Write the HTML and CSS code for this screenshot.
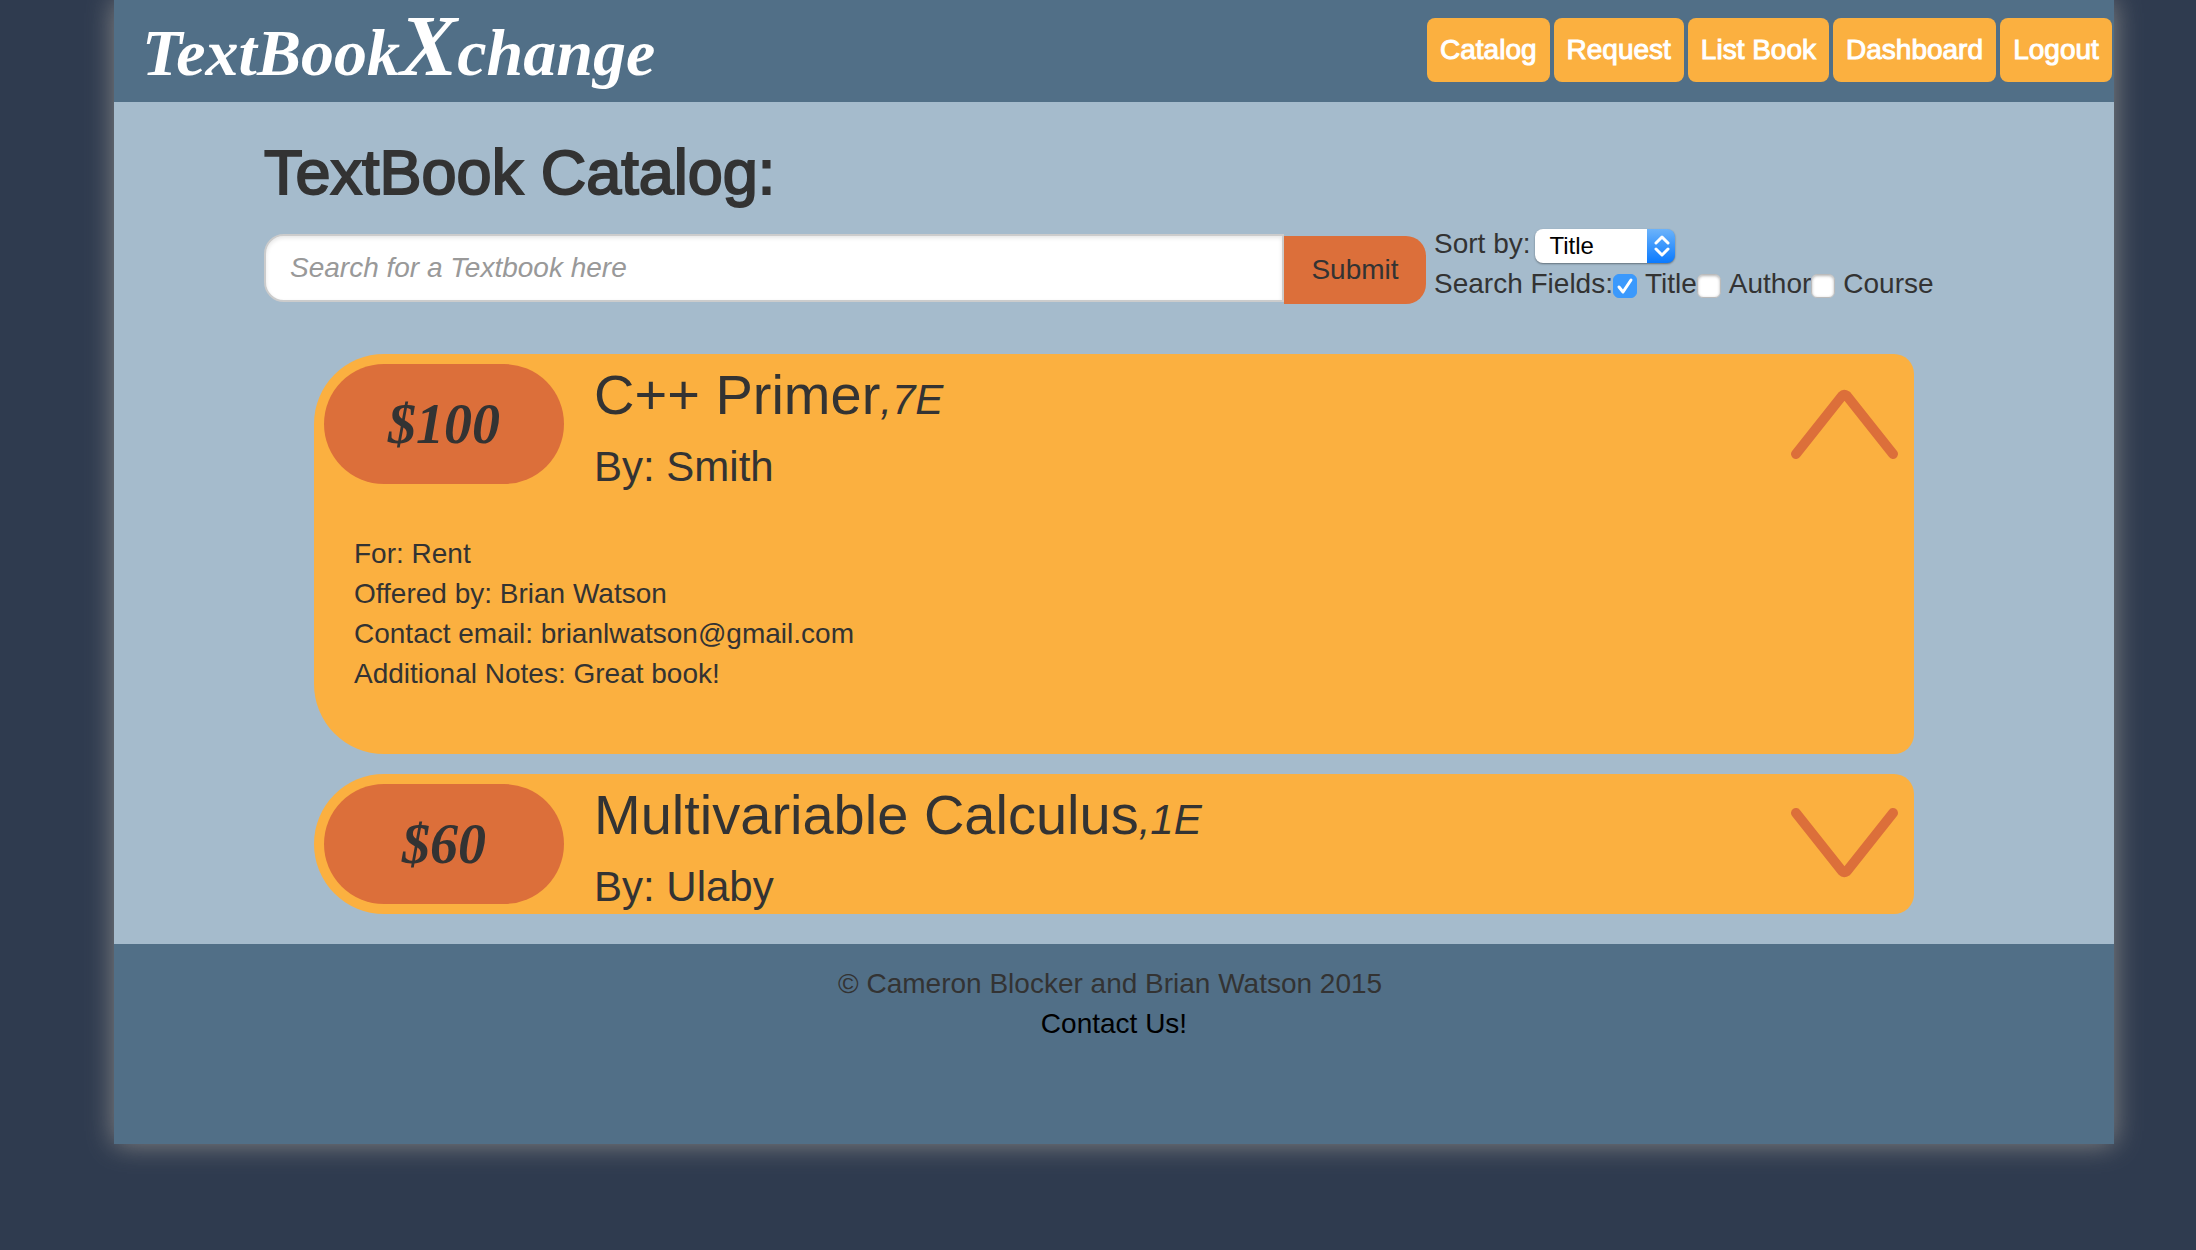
FILE: index.html
```html
<!DOCTYPE html>
<html lang="en">
<head>
<meta charset="utf-8">
<title>TextBookXchange</title>
<link rel="stylesheet" href="styles.css">
</head>
<body>
<div class="page">
  <header class="header">
    <a class="logo" href="#">TextBook<span class="logo-x">X</span>change</a>
    <nav class="nav">
      <a class="nav-link" href="#">Catalog</a>
      <a class="nav-link" href="#">Request</a>
      <a class="nav-link" href="#">List Book</a>
      <a class="nav-link" href="#">Dashboard</a>
      <a class="nav-link" href="#">Logout</a>
    </nav>
  </header>
  <main class="content">
    <h1 class="heading">TextBook Catalog:</h1>
    <form class="search">
      <input class="search-box" type="text" placeholder="Search for a Textbook here" aria-label="Search for a Textbook here">
      <button class="submit" type="submit">Submit</button>
      <div class="options">
        <div class="option-row">
          <label for="sort">Sort by:</label>
          <span class="select-wrap">
            <select class="select" id="sort"><option>Title</option><option>Author</option><option>Course</option></select>
            <svg class="select-arrows" viewBox="0 0 28 34" aria-hidden="true"><path d="M9 14l6-6 6 6M9 20l6 6 6-6"/></svg>
          </span>
        </div>
        <div class="option-row">
          <span>Search Fields:</span>
          <label class="field"><span class="check-wrap"><input class="check" type="checkbox" checked><svg class="tick" viewBox="0 0 24 24" aria-hidden="true"><path d="M6 13l4 5 8-12"/></svg></span>Title</label>
          <label class="field"><span class="check-wrap"><input class="check" type="checkbox"></span>Author</label>
          <label class="field"><span class="check-wrap"><input class="check" type="checkbox"></span>Course</label>
        </div>
      </div>
    </form>
    <section class="books">
      <article class="book">
        <div class="book-head">
          <div class="price">$100</div>
          <div class="book-info">
            <h2 class="title">C++ Primer<em class="edition">,7E</em></h2>
            <p class="author">By: Smith</p>
          </div>
          <button class="toggle" type="button" aria-label="Hide details">
            <svg class="arrow" viewBox="0 0 108 76"><path d="M6 69L52 11Q54 9 57 11L103 69"/></svg>
          </button>
        </div>
        <div class="details">
          <p>For: Rent</p>
          <p>Offered by: Brian Watson</p>
          <p>Contact email: brianlwatson@gmail.com</p>
          <p>Additional Notes: Great book!</p>
        </div>
      </article>
      <article class="book">
        <div class="book-head">
          <div class="price">$60</div>
          <div class="book-info">
            <h2 class="title">Multivariable Calculus<em class="edition">,1E</em></h2>
            <p class="author">By: Ulaby</p>
          </div>
          <button class="toggle" type="button" aria-label="Show details">
            <svg class="arrow" viewBox="0 0 108 76"><path d="M6 8L52 66Q54 68 57 66L103 8"/></svg>
          </button>
        </div>
      </article>
    </section>
  </main>
  <footer class="footer">
    <p>© Cameron Blocker and Brian Watson 2015&nbsp;</p>
    <p><a class="contact" href="#">Contact Us!</a></p>
  </footer>
</div>
</body>
</html>
```
FILE: styles.css
```css
* { box-sizing: border-box; }
body {
  margin: 0;
  padding: 0 82px 106px 114px;
  background: #2f3b4f;
  color: #333;
  font: 28px/40px "Liberation Sans", Arial, sans-serif;
}
h1, h2, p { margin: 0; font-weight: 400; }
a { text-decoration: none; }

.page {
  max-width: 2000px;
  margin: 0 auto;
  background: #a5bbcc;
  box-shadow: 0 0 26px #888;
}

.header {
  display: flex;
  justify-content: space-between;
  align-items: flex-start;
  height: 102px;
  padding: 0 2px 0 28px;
  background: #516f87;
}
.logo {
  color: #fff;
  font: italic 700 66px/106px "Liberation Serif", "Times New Roman", serif;
}
.logo-x { font-size: 86px; line-height: 64px; }
.nav { display: flex; gap: 4px; padding-top: 18px; }
.nav-link {
  padding: 12px;
  min-width: 112px;
  border-radius: 8px;
  background: #fbb040;
  color: #fff;
  text-align: center;
  -webkit-text-stroke: 1px #fff;
}
.nav-link { padding: 12px 13px; }

.content { padding: 32px 150px 30px; }
.heading {
  font-size: 63px;
  line-height: 76px;
  -webkit-text-stroke: 2px #333;
}
.search { display: flex; align-items: flex-start; padding-top: 14px; }
.search-box {
  flex: 0 1 1020px;
  min-width: 0;
  height: 68px;
  margin-top: 10px;
  padding: 0 24px;
  border: 2px solid #ccc;
  border-radius: 20px 0 0 20px;
  background: #fff;
  box-shadow: inset 0 2px 4px rgba(0, 0, 0, 0.1);
  color: #333;
  font: italic 28px/40px "Liberation Sans", Arial, sans-serif;
}
.search-box::placeholder { color: #999; opacity: 1; }
.submit {
  width: 142px;
  height: 68px;
  margin-top: 12px;
  padding: 0;
  border: 0;
  border-radius: 0 20px 20px 0;
  background: #dc6f3a;
  color: #333;
  font: inherit;
}
.options { padding-left: 8px; white-space: nowrap; }
.option-row { display: flex; align-items: center; height: 40px; }
.select-wrap { position: relative; display: flex; margin: 4px 0 0 5px; }
.select {
  width: 140px;
  height: 34px;
  padding: 0 14px;
  border: 0;
  border-radius: 8px;
  appearance: none;
  background: linear-gradient(#6cb3fa, #0a7aff) right / 28px 100% no-repeat #fff;
  box-shadow: 0 1px 2px rgba(0, 0, 0, 0.4);
  color: #000;
  font: 24px/34px "Liberation Sans", Arial, sans-serif;
}
.select-arrows {
  position: absolute;
  top: 0;
  right: 0;
  width: 28px;
  height: 34px;
  fill: none;
  stroke: #fff;
  stroke-width: 3;
  stroke-linecap: round;
  stroke-linejoin: round;
  pointer-events: none;
}
.field { display: flex; align-items: center; gap: 8px; }
.check-wrap { position: relative; display: flex; margin-top: 4px; }
.check {
  width: 24px;
  height: 24px;
  margin: 0;
  border: 1px solid #bbb;
  border-radius: 6px;
  appearance: none;
  background: #fff;
  box-shadow: inset 0 1px 3px rgba(0, 0, 0, 0.3);
}
.check:checked {
  border-color: #3b99fc;
  background: #3b99fc;
  box-shadow: none;
}
.tick {
  position: absolute;
  inset: 0;
  fill: none;
  stroke: #fff;
  stroke-width: 3;
  stroke-linecap: round;
  stroke-linejoin: round;
  pointer-events: none;
}

.books { display: grid; gap: 20px; padding: 50px 50px 0; }
.book {
  overflow: hidden;
  border-radius: 70px 20px 20px 70px;
  background: #fbb040;
}
.book-head { display: flex; height: 140px; padding: 10px; }
.price {
  flex: none;
  width: 240px;
  height: 120px;
  border-radius: 60px;
  background: #dc6f3a;
  font: italic 700 56px/120px "Liberation Serif", "Times New Roman", serif;
  text-align: center;
}
.book-info { flex: 1; padding-left: 30px; }
.title { font-size: 56px; line-height: 62px; }
.edition { font-size: 42px; }
.author { font-size: 42px; line-height: 60px; padding-top: 6px; }
.toggle {
  flex: none;
  width: 120px;
  height: 120px;
  padding: 0;
  border: 0;
  background: none;
}
.arrow {
  width: 108px;
  height: 76px;
  fill: none;
  stroke: #dc6f3a;
  stroke-width: 10;
  stroke-linecap: round;
  stroke-linejoin: round;
}
.details { padding: 40px 40px 60px; }

.footer {
  height: 200px;
  padding-top: 20px;
  background: #516f87;
  text-align: center;
}
.contact { color: #000; }
```
